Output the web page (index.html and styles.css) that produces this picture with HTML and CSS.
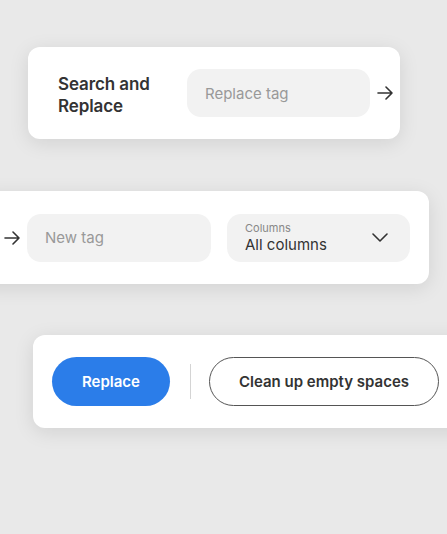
FILE: index.html
```html
<!DOCTYPE html>
<html lang="en">
<head>
  <meta charset="UTF-8">
  <meta name="viewport" content="width=device-width, initial-scale=1.0">
  <title>Search and Replace</title>
  <link rel="stylesheet" href="styles.css">
</head>
<body>
<div class="stack">

  <div class="card card-search">
    <h2 class="title">Search and<br>Replace</h2>
    <div class="field">Replace tag</div>
    <svg class="arrow" width="17" height="14" viewBox="0 0 17 14">
      <path d="M1 7h14M9 1l6 6-6 6" fill="none" stroke="#333" stroke-width="1.6" stroke-linecap="round" stroke-linejoin="round"/>
    </svg>
  </div>

  <div class="card card-target">
    <svg class="arrow" width="17" height="14" viewBox="0 0 17 14">
      <path d="M1 7h14M9 1l6 6-6 6" fill="none" stroke="#333" stroke-width="1.6" stroke-linecap="round" stroke-linejoin="round"/>
    </svg>
    <div class="field">New tag</div>
    <div class="field select">
      <div class="select-text">
        <span class="select-label">Columns</span>
        <span class="select-value">All columns</span>
      </div>
      <svg width="16" height="9" viewBox="0 0 16 9">
        <path d="M1 1l7 7 7-7" fill="none" stroke="#333" stroke-width="1.6" stroke-linecap="round" stroke-linejoin="round"/>
      </svg>
    </div>
  </div>

  <div class="card card-actions">
    <button class="btn btn-primary">Replace</button>
    <div class="divider"></div>
    <button class="btn btn-outline">Clean up empty spaces</button>
  </div>

</div>
</body>
</html>
```

FILE: styles.css
```css
body {
  margin: 0;
  background-color: #e9e9e9;
  font-family: Inter, "Noto Sans", sans-serif;
  color: #333;
  overflow: hidden;
}

.stack {
  display: flex;
  flex-direction: column;
  padding-top: 47px;
  width: 447px;
  height: 534px;
  box-sizing: border-box;
  overflow: hidden;
}

.card {
  background-color: white;
  border-radius: 12px;
  box-shadow: 0 4px 20px rgba(0, 0, 0, 0.1);
  display: flex;
  align-items: center;
  box-sizing: border-box;
  flex-shrink: 0;
}

.card-search {
  margin-left: 28px;
  width: 372px;
  height: 92px;
  padding-left: 30px;
}

.title {
  margin: 4px 0 0;
  width: 129px;
  font-size: 17px;
  font-weight: 600;
  line-height: 22px;
  color: #333;
  letter-spacing: -0.1px;
}

.field {
  background-color: #f2f2f2;
  border-radius: 14px;
  height: 48px;
  width: 183px;
  box-sizing: border-box;
  padding-left: 18px;
  display: flex;
  align-items: center;
  font-size: 15px;
  color: #999;
}

.card-search .arrow {
  margin-left: 7px;
}

.card-target {
  margin-top: 52px;
  margin-left: -20px;
  width: 449px;
  height: 93px;
  padding-left: 24px;
}

.card-target .arrow {
  margin-right: 6px;
}

.card-target .field {
  width: 184px;
  margin-right: 16px;
}

.card-target .select {
  width: 183px;
  margin-right: 0;
  padding-right: 22px;
  justify-content: space-between;
}

.select-text {
  display: flex;
  flex-direction: column;
}

.select-label {
  font-size: 11px;
  color: #888;
  line-height: 13px;
}

.select-value {
  font-size: 15px;
  color: #333;
  line-height: 19px;
}

.card-actions {
  margin-top: 51px;
  margin-left: 33px;
  width: 440px;
  height: 93px;
  padding-left: 19px;
}

.btn {
  font-family: Inter, "Noto Sans", sans-serif;
  font-size: 15px;
  font-weight: 600;
  height: 49px;
  border-radius: 25px;
  cursor: pointer;
  flex-shrink: 0;
}

.btn-primary {
  width: 118px;
  background-color: #2b7de9;
  color: white;
  border: none;
}

.divider {
  width: 1px;
  height: 35px;
  background-color: #d4d4d4;
  margin: 0 18px 0 20px;
  flex-shrink: 0;
}

.btn-outline {
  width: 230px;
  background-color: white;
  color: #333;
  border: 1px solid #555;
}
```
